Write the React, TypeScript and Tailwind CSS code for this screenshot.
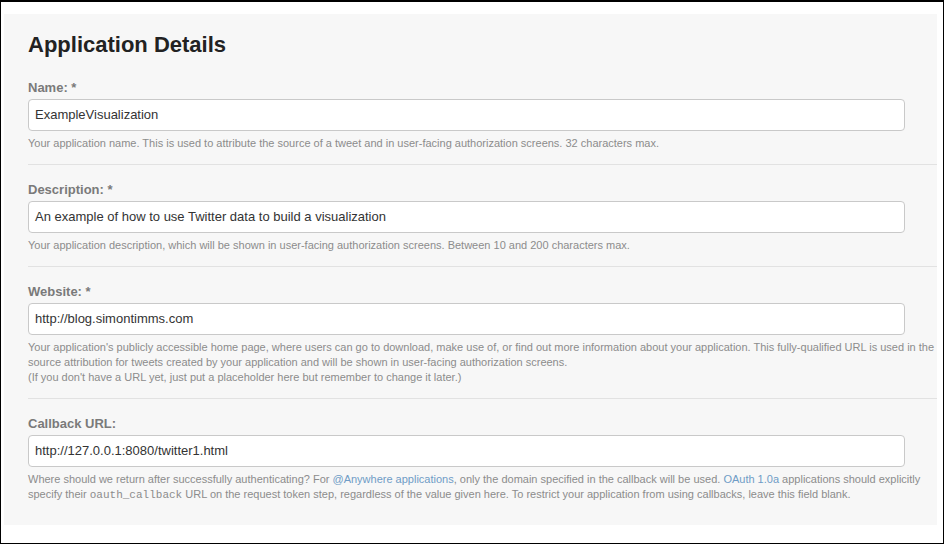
import React from "react";

type Field = {
  label: string;
  required?: boolean;
  value: string;
  help: React.ReactNode;
};

const link = "text-[#6f9cc6]";

const fields: Field[] = [
  {
    label: "Name:",
    required: true,
    value: "ExampleVisualization",
    help: (
      <>
        Your application name. This is used to attribute the source of a tweet and in user-facing authorization
        screens. 32 characters max.
      </>
    ),
  },
  {
    label: "Description:",
    required: true,
    value: "An example of how to use Twitter data to build a visualization",
    help: (
      <>
        Your application description, which will be shown in user-facing authorization screens. Between 10 and 200
        characters max.
      </>
    ),
  },
  {
    label: "Website:",
    required: true,
    value: "http://blog.simontimms.com",
    help: (
      <>
        Your application's publicly accessible home page, where users can go to download, make use of, or find out
        more information about your application. This fully-qualified URL is used in the
        <br />
        source attribution for tweets created by your application and will be shown in user-facing authorization
        screens.
        <br />
        (If you don't have a URL yet, just put a placeholder here but remember to change it later.)
      </>
    ),
  },
  {
    label: "Callback URL:",
    value: "http://127.0.0.1:8080/twitter1.html",
    help: (
      <>
        Where should we return after successfully authenticating? For <span className={link}>@Anywhere applications</span>,
        only the domain specified in the callback will be used. <span className={link}>OAuth 1.0a</span> applications
        should explicitly
        <br />
        specify their{" "}
        <code className="font-['Liberation_Mono',monospace] text-[11px]">oauth_callback</code> URL on the request token
        step, regardless of the value given here. To restrict your application from using callbacks, leave this field
        blank.
      </>
    ),
  },
];

function FormField({ field, first }: { field: Field; first: boolean }) {
  return (
    <div className={first ? "pr-[32px]" : "border-t border-[#e2e2e2] pt-[16px] pr-[32px]"}>
      <label className="block text-[13px] leading-[18px] font-bold text-[#7a7a7a]">
        {field.label}
        {field.required && " *"}
      </label>
      <div className="mt-[2px] h-[32px] w-[877px] rounded-[4px] border border-[#c9c9c9] bg-white px-[6px] flex items-center text-[13px] text-[#333]">
        {field.value}
      </div>
      <p className="mt-[5px] mb-[13px] text-[11px] leading-[15px] text-[#8c8c8c] whitespace-nowrap">{field.help}</p>
    </div>
  );
}

export default function App() {
  return (
    <div className="w-[944px] h-[544px] bg-white border border-black border-t-2 pt-[12px] pl-[3px] pr-[6px] font-['Liberation_Sans',Arial,sans-serif]">
      <div className="h-[511px] bg-[#f7f7f7] pl-[24px] pt-[18px]">
        <h1 className="text-[22px] leading-[26px] font-bold text-[#222] mb-[21px]">Application Details</h1>
        {fields.map((f, i) => (
          <FormField key={f.label} field={f} first={i === 0} />
        ))}
      </div>
    </div>
  );
}
